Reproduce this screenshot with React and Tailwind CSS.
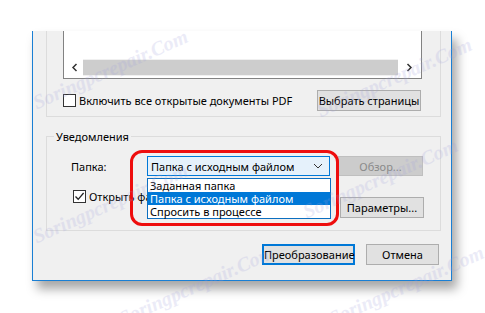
import React from "react";

const FONT = { fontFamily: '"Noto Sans", "Open Sans", sans-serif' };

function Check({ checked }) {
  return (
    <span className="inline-flex w-[13px] h-[13px] border border-[#333333] bg-white items-center justify-center shrink-0">
      {checked && (
        <svg width="11" height="11" viewBox="0 0 11 11">
          <path d="M1.5 5.5 L4.2 8.3 L9.6 2" fill="none" stroke="#222" strokeWidth="1.3" />
        </svg>
      )}
    </span>
  );
}

function Watermark({ className }) {
  return (
    <span
      className={
        "absolute pointer-events-none whitespace-nowrap italic font-bold text-[20px] text-[#a0a0dc] opacity-20 -rotate-[24deg] origin-left " +
        className
      }
      style={{ fontFamily: '"Liberation Serif", serif' }}
    >
      Soringpcrepair.Com
    </span>
  );
}

export default function App() {
  return (
    <div className="relative w-[485px] h-[313px] bg-white overflow-hidden text-[11px] leading-[15px] text-black" style={FONT}>
      <div className="pl-[32px] pt-[31px]">
        <div className="relative w-[420px] h-[250px] bg-[#f0f0f0] border-x border-b border-[#1a7fd4] shadow-[5px_8px_10px_rgba(0,0,0,0.35)] flex flex-col">
          {/* top group */}
          <div className="ml-[13px] mr-[10px] h-[86px] border-x border-b border-[#dcdcdc] flex flex-col">
            <div className="ml-[16px] w-[359px] h-[48px] border-x border-b border-[#828282] bg-white flex flex-col justify-end">
              <div className="h-[17px] mx-[2px] mb-[2px] flex items-center bg-[#f0f0f0]">
                <span className="w-[17px] h-[17px] flex items-center justify-center bg-white">
                  <svg width="8" height="9" viewBox="0 0 8 9"><path d="M5.5 1 L2 4.5 L5.5 8" fill="none" stroke="#333" strokeWidth="1.5" /></svg>
                </span>
                <span className="flex-1 h-[15px] bg-[#cdcdcd]" />
                <span className="w-[21px] h-[17px] flex items-center justify-center bg-white">
                  <svg width="8" height="9" viewBox="0 0 8 9"><path d="M2.5 1 L6 4.5 L2.5 8" fill="none" stroke="#333" strokeWidth="1.5" /></svg>
                </span>
              </div>
            </div>
            <div className="mt-[11px] ml-[16px] flex items-center">
              <Check />
              <span className="ml-[3px] w-[238px] whitespace-nowrap">Включить все открытые документы PDF</span>
              <button className="w-[104px] h-[21px] bg-[#e1e1e1] border border-[#adadad] text-black whitespace-nowrap">Выбрать страницы</button>
            </div>
          </div>

          {/* notifications group */}
          <fieldset className="mt-[12px] ml-[13px] mr-[10px] h-[102px] border border-[#dcdcdc] px-0 relative">
            <legend className="ml-[7px] px-[2px] leading-[15px]">Уведомления</legend>
            <div className="flex items-center mt-[12px] ml-[24px] h-[20px]">
              <span className="w-[76px]">Папка:</span>
              <div className="w-[183px] h-[20px] border border-[#0078d7] bg-[#e5f1fb] flex items-center pl-[3px] pr-[6px]">
                <span className="flex-1 truncate">Папка с исходным файлом</span>
                <svg width="10" height="6" viewBox="0 0 10 6"><path d="M1 1 L5 5 L9 1" fill="none" stroke="#333" strokeWidth="1" /></svg>
              </div>
              <button className="ml-[8px] w-[85px] h-[20px] bg-[#cccccc] border border-[#bfbfbf] text-[#8a8a8a]">Обзор...</button>
            </div>
            <div className="flex items-start mt-[14px] ml-[26px]">
              <div className="flex items-center w-[267px] h-[13px]">
                <Check checked />
                <span className="ml-[3px] whitespace-nowrap overflow-hidden">Открыть файл после преобразования</span>
              </div>
              <button className="mt-[7px] w-[84px] h-[21px] bg-[#e1e1e1] border border-[#adadad] whitespace-nowrap">Параметры...</button>
            </div>
          </fieldset>

          {/* bottom buttons */}
          <div className="mt-[13px] flex justify-end gap-[11px] mr-[12px]">
            <button className="w-[93px] h-[21px] bg-[#e1e1e1] border-2 border-[#0078d7] whitespace-nowrap">Преобразование</button>
            <button className="w-[73px] h-[21px] bg-[#e1e1e1] border border-[#adadad]">Отмена</button>
          </div>

          {/* dropdown list overlay */}
          <div className="absolute left-[114px] top-[147px] w-[184px] border border-[#0c6fc0] bg-white flex flex-col leading-[13px]">
            <span className="pl-[2px] h-[13px]">Заданная папка</span>
            <span className="pl-[2px] h-[13px] bg-[#0078d7] text-white">Папка с исходным файлом</span>
            <span className="pl-[2px] h-[13px]">Спросить в процессе</span>
          </div>
          {/* red highlight */}
          <div className="absolute left-[97px] top-[119px] w-[209px] h-[76px] border-[3px] border-[#ee0d0d] rounded-[12px] pointer-events-none" />
        </div>
      </div>

      <Watermark className="left-[34px] top-[96px]" />
      <Watermark className="left-[318px] top-[104px]" />
      <Watermark className="left-[34px] top-[230px]" />
      <Watermark className="left-[304px] top-[205px]" />
      <Watermark className="left-[120px] top-[312px]" />
      <Watermark className="left-[330px] top-[312px]" />
    </div>
  );
}
